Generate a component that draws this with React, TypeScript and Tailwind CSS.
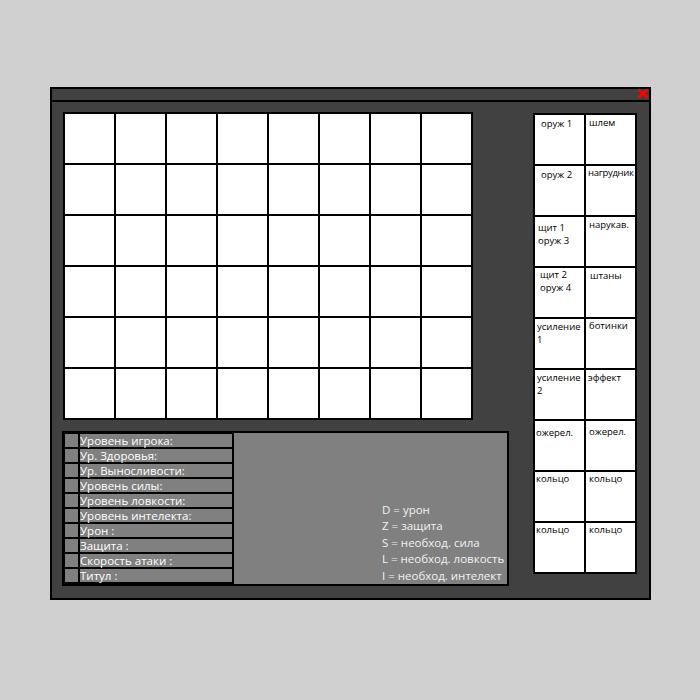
import React from 'react';

const stats = [
  'Уровень игрока:',
  'Ур. Здоровья:',
  'Ур. Выносливости:',
  'Уровень силы:',
  'Уровень ловкости:',
  'Уровень интелекта:',
  'Урон :',
  'Защита :',
  'Скорость атаки :',
  'Титул :',
];

const legend = [
  'D = урон',
  'Z = защита',
  'S = необход. сила',
  'L = необход. ловкость',
  'I = необход. интелект',
];

// each slot: label lines + hand-tuned offsets (as in the mockup)
const slots: { lines: string[]; cls: string }[] = [
  { lines: ['оруж 1'], cls: 'pl-[6px] pt-[2px]' },
  { lines: ['шлем'], cls: 'pl-[3px] pt-[1px]' },
  { lines: ['оруж 2'], cls: 'pl-[6px] pt-[2px]' },
  { lines: ['нагрудник'], cls: 'pl-[2px] pt-0 tracking-[-0.3px]' },
  { lines: ['щит 1', 'оруж 3'], cls: 'pl-[3px] pt-[4px]' },
  { lines: ['нарукав.'], cls: 'pl-[3px] pt-[1px]' },
  { lines: ['щит 2', 'оруж 4'], cls: 'pl-[5px] pt-0' },
  { lines: ['штаны'], cls: 'pl-[4px] pt-[1px]' },
  { lines: ['усиление', '1'], cls: 'pl-[2px] pt-[1px]' },
  { lines: ['ботинки'], cls: 'pl-[3px] pt-0' },
  { lines: ['усиление', '2'], cls: 'pl-[2px] pt-[1px]' },
  { lines: ['эффект'], cls: 'pl-[2px] pt-[1px]' },
  { lines: ['ожерел.'], cls: 'pl-[1px] pt-[5px]' },
  { lines: ['ожерел.'], cls: 'pl-[3px] pt-[4px]' },
  { lines: ['кольцо'], cls: 'pl-[1px] pt-0' },
  { lines: ['кольцо'], cls: 'pl-[3px] pt-0' },
  { lines: ['кольцо'], cls: 'pl-[1px] pt-0' },
  { lines: ['кольцо'], cls: 'pl-[3px] pt-0' },
];

export default function App() {
  return (
    <div
      className="w-[700px] h-[700px] bg-[#d0d0d0] pt-[87px] pl-[50px]"
      style={{ fontFamily: '"Open Sans", "Noto Sans", sans-serif' }}
    >
      <div className="w-[601px] h-[513px] border-2 border-black bg-[#414141] flex flex-col">
        {/* title bar */}
        <div className="h-[13px] border-b-2 border-black flex justify-end items-start">
          <svg width="12" height="11" viewBox="0 0 12 11" className="mt-[-1px]">
            <path d="M1.5 1.5 L10.5 9.5 M10.5 1.5 L1.5 9.5" stroke="#ff0000" strokeWidth="3" />
          </svg>
        </div>

        <div className="flex items-start">
          {/* left: inventory + stats */}
          <div className="ml-[10px] w-[447px] shrink-0 flex flex-col">
            <div className="ml-[1px] mt-[10px] w-[410px] grid grid-cols-8 gap-[2px] p-[2px] bg-black">
              {Array.from({ length: 48 }).map((_, i) => (
                <div key={i} className="h-[49px] bg-white" />
              ))}
            </div>

            <div className="mt-[11px] h-[155px] border-2 border-black bg-black flex">
              <div className="w-[170px] shrink-0 pl-[1px] pt-[1px] pr-[2px] flex flex-col gap-[2px]">
                {stats.map((s) => (
                  <div key={s} className="flex gap-[2px] h-[13px]">
                    <div className="w-[13px] shrink-0 bg-[#808080]" />
                    <div className="flex-1 bg-[#808080] text-white text-[11.5px] leading-[13px] whitespace-nowrap">
                      {s}
                    </div>
                  </div>
                ))}
              </div>
              <div className="flex-1 min-w-0 bg-[#808080] flex flex-col justify-end pl-[148px] pb-0">
                {legend.map((l) => (
                  <div key={l} className="text-[#f2f2f2] text-[11.5px] leading-[16.5px] whitespace-nowrap">
                    {l}
                  </div>
                ))}
              </div>
            </div>
          </div>

          {/* right: equipment slots */}
          <div className="ml-[24px] mt-[11px] w-[104px] grid grid-cols-2 gap-[2px] p-[2px] bg-black">
            {slots.map((s, i) => (
              <div key={i} className={`h-[49px] bg-white text-black text-[9.5px] leading-[13px] whitespace-nowrap overflow-hidden ${s.cls}`}>
                {s.lines.map((l) => (
                  <div key={l}>{l}</div>
                ))}
              </div>
            ))}
          </div>
        </div>
      </div>
    </div>
  );
}
